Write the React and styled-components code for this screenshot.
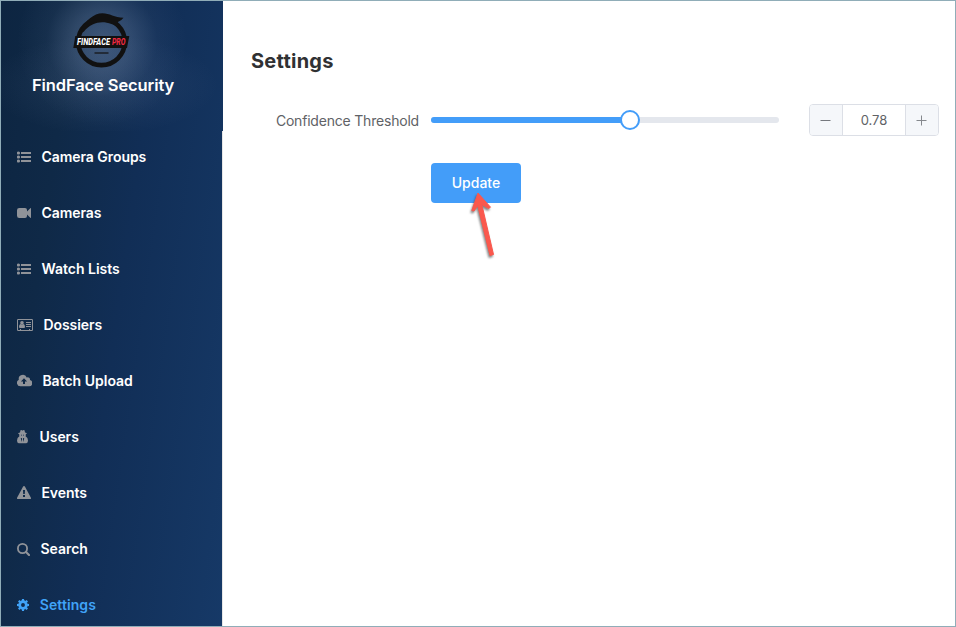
import React from "react";
import styled, { createGlobalStyle } from "styled-components";

const Global = createGlobalStyle`
  *, *::before, *::after { box-sizing: border-box; }
  body { margin: 0; background: #fff; font-family: Inter, "Liberation Sans", sans-serif; }
`;

const Frame = styled.div`
  display: flex;
  width: 956px;
  height: 627px;
  overflow: hidden;
  border: 1px solid #90adb8;
  background: #fff;
`;

const Sidebar = styled.aside`
  flex: 0 0 222px;
  display: flex;
  flex-direction: column;
  background: linear-gradient(98deg, #0d2541 0%, #0f2947 24%, #112e56 52%, #163967 100%);
`;

const Brand = styled.header`
  flex: 0 0 130px;
  display: flex;
  flex-direction: column;
  align-items: center;
  padding: 11px 18px 0 0;
  background:
    radial-gradient(circle 85px at 101px 40px, rgba(150, 170, 205, 0.34), rgba(150, 170, 205, 0.23) 35%, rgba(150, 170, 205, 0.06) 65%, transparent),
    radial-gradient(ellipse 115px 50px at 102px 84px, rgba(150, 170, 205, 0.12), transparent);
`;

const Logo = styled.svg`
  display: block;
  width: 60px;
  height: 56px;
  margin-right: 3px;
`;

const BrandName = styled.div`
  margin-top: 6px;
  color: #fff;
  font-size: 16.5px;
  font-weight: 600;
  line-height: 22px;
  letter-spacing: -0.1px;
  white-space: nowrap;
`;

const Menu = styled.nav`
  flex: 1;
  display: flex;
  flex-direction: column;
  border-right: 1px solid #e6e6e6;
`;

const MenuItem = styled.a`
  flex: 0 0 56px;
  display: flex;
  align-items: center;
  gap: ${(p) => p.$gap || 10.4}px;
  padding-left: 16px;
  color: ${(p) => (p.$active ? "#40a3f8" : "#fff")};
  font-size: 14px;
  font-weight: 600;
  letter-spacing: ${(p) => p.$spacing || 0}px;
  white-space: nowrap;

  &:first-child {
    margin-top: -3px;
  }

  svg {
    flex: none;
    margin-top: 2px;
    color: ${(p) => (p.$active ? "#40a3f8" : "#909399")};
  }
`;

const Main = styled.main`
  flex: 1;
  padding: 45px 16px 0 28px;
`;

const Title = styled.h1`
  margin: 0;
  color: #303133;
  font-size: 20px;
  font-weight: 700;
  line-height: 30px;
  letter-spacing: 0.25px;
`;

const Row = styled.div`
  display: flex;
  align-items: center;
  height: 40px;
  margin-top: 24px;
`;

const Label = styled.label`
  flex: 0 0 180px;
  padding: 1px 12px 0 0;
  color: #606266;
  font-size: 14px;
  letter-spacing: -0.2px;
  text-align: right;
  white-space: nowrap;
`;

const Track = styled.div`
  flex: 0 0 348px;
  display: flex;
  align-items: center;
  height: 6px;
  border-radius: 3px;
  background: #e4e7ed;
`;

const Fill = styled.div`
  width: 199px;
  height: 6px;
  border-radius: 3px 0 0 3px;
  background: #439df9;
`;

const Thumb = styled.div`
  flex: none;
  width: 20px;
  height: 20px;
  margin-left: -10px;
  border: 2px solid #439df9;
  border-radius: 50%;
  background: #fff;
`;

const Stepper = styled.div`
  display: grid;
  grid-template-columns: 32px 1fr 32px;
  width: 130px;
  height: 32px;
  margin-left: 30px;
  overflow: hidden;
  border: 1px solid #dcdfe6;
  border-radius: 4px;
`;

const StepButton = styled.button`
  display: grid;
  place-items: center;
  padding: 0 1px 0 0;
  border: 0;
  background: #f5f7fa;
  color: #606266;
`;

const StepValue = styled.div`
  border: solid #dcdfe6;
  border-width: 0 1px;
  color: #606266;
  font-size: 13px;
  line-height: 31px;
  text-align: center;
`;

const Actions = styled.div`
  position: relative;
  width: 90px;
  margin: 23px 0 0 180px;
`;

const Update = styled.button`
  display: block;
  width: 90px;
  height: 40px;
  padding: 0 0 1px;
  border: 0;
  border-radius: 4px;
  background: #439df9;
  color: #fff;
  font: 500 14px Inter, sans-serif;
`;

const Pointer = styled.svg`
  position: absolute;
  left: 35px;
  top: 26px;
  width: 40px;
  height: 74px;
  filter: drop-shadow(-1px 2px 1px rgba(50, 50, 50, 0.6));
`;

const ListIcon = () => (
  <svg width="14" height="14" viewBox="0 0 14 14" fill="currentColor">
    <circle cx="1.5" cy="3" r="1.6" /><circle cx="1.5" cy="7" r="1.6" /><circle cx="1.5" cy="11" r="1.6" />
    <path d="M4 2h10v2H4zM4 6h10v2H4zM4 10h10v2H4z" />
  </svg>
);

const CameraIcon = () => (
  <svg width="14" height="14" viewBox="0 0 14 14" fill="currentColor">
    <path d="M2.3 2H8a2 2 0 0 1 2 2v1.5L13.3 2.2q.7-.4.7.4v8.8q0 .8-.7.4L10 8.5V10a2 2 0 0 1-2 2H2.3A2.3 2.3 0 0 1 0 9.7V4.3A2.3 2.3 0 0 1 2.3 2z" />
  </svg>
);

const CardIcon = () => (
  <svg width="16" height="14" viewBox="0 0 16 14" fill="currentColor">
    <path fillRule="evenodd" d="M1.2 1h13.6Q16 1 16 2.2v9.6q0 1.2-1.2 1.2H1.2Q0 13 0 11.8V2.2Q0 1 1.2 1zM1 2v9.7q0 .3.3.3H3v-1h1v1h8v-1h1v1h1.7q.3 0 .3-.3V2z" />
    <circle cx="5" cy="4.8" r="1.8" />
    <path d="M3.4 6.1Q2 6.7 2 9q0 1 1 1h4q1 0 1-1 0-2.3-1.4-2.9Q5 7 3.4 6.1zM9 4h5v1H9zM9 6h5v1H9zM9 8h5v1H9z" />
  </svg>
);

const CloudIcon = () => (
  <svg width="15" height="14" viewBox="0 0 15 14" fill="currentColor">
    <path fillRule="evenodd" d="M3.5 12.3A3.5 3.5 0 0 1 1.8 5.7 4.1 4.1 0 0 1 9.7 3.6 2.1 2.1 0 0 1 12.9 6 3.2 3.2 0 0 1 12 12.3zM7 4.2 3.9 7.4h2.1V10h2V7.4h2.1z" />
  </svg>
);

const SpyIcon = () => (
  <svg width="11" height="14" viewBox="0 0 11 14" fill="currentColor">
    <path fillRule="evenodd" d="M3.5.3q.7-.4 1.4 0 .6.4 1.2 0 .7-.4 1.4 0L8 2.4q2 .3 2 .9T8.8 4v1.2L8.6 6.2Q11 7.4 11 10.6q0 2.6-1.7 2.6H1.7Q0 13.2 0 10.6 0 7.4 2.4 6.2L2.2 5.2V4Q1 3.9 1 3.3T3 2.4zM4 4.8v.7h1v-.7zm2 0v.7h1v-.7zM3.8 8l.6 4.1.7-3L4.7 8zm2.5 0-.4 1.1.7 3L7.2 8z" />
  </svg>
);

const WarningIcon = () => (
  <svg width="14" height="14" viewBox="0 0 14 14" fill="currentColor">
    <path fillRule="evenodd" d="M7 0q.6 0 .9.6l5.9 10.9q.7 1.5-.8 1.5H1q-1.5 0-.8-1.5L6.1.6Q6.4 0 7 0zM6 4 6.2 8h1.6L8 4zM6 9v2h2V9z" />
  </svg>
);

const SearchIcon = () => (
  <svg width="13" height="14" viewBox="0 0 13 14" fill="none" stroke="currentColor">
    <circle cx="5.5" cy="6.5" r="4.6" strokeWidth="1.8" />
    <path d="m9 10 3 3" strokeWidth="2.1" strokeLinecap="round" />
  </svg>
);

const TEETH = [0, 45, 90, 135, 180, 225, 270, 315];

const GearIcon = () => (
  <svg width="12" height="14" viewBox="0 0 12 14">
    <circle cx="6" cy="7" r="3.3" fill="none" stroke="currentColor" strokeWidth="2.7" />
    {TEETH.map((a) => (
      <path key={a} d="M4.7 2.9 5 1h2l.3 1.9z" fill="currentColor" transform={`rotate(${a} 6 7)`} />
    ))}
  </svg>
);

const ITEMS = [
  { label: "Camera Groups", icon: ListIcon, spacing: -0.05 },
  { label: "Cameras", icon: CameraIcon, spacing: -0.05 },
  { label: "Watch Lists", icon: ListIcon },
  { label: "Dossiers", icon: CardIcon, spacing: -0.05 },
  { label: "Batch Upload", icon: CloudIcon },
  { label: "Users", icon: SpyIcon, gap: 11.5, spacing: -0.05 },
  { label: "Events", icon: WarningIcon, spacing: -0.05 },
  { label: "Search", icon: SearchIcon },
  { label: "Settings", icon: GearIcon, active: true, gap: 10.7, spacing: 0.1 },
];

function BrandLogo() {
  return (
    <Logo viewBox="0 0 60 56">
      <circle cx="29.5" cy="29.8" r="23.3" fill="none" stroke="#111" strokeWidth="4.6" />
      <path d="M8.5 18C13.5 9 21.5 1.2 30.5 1.2c7 0 12 4.3 21 4.5q-2 3-6 4.5l2 6C37.5 9.5 23 6 11.5 20z" fill="#111" />
      <path d="M3.3 24h54L55 36H1.3z" fill="#111" />
      <path d="M22.5 41h14" stroke="#222b38" strokeWidth="2" />
      <text x="5" y="32.8" fill="#fff" fontFamily="Roboto" fontSize="8.2" fontWeight="800" fontStyle="italic" textLength="33" lengthAdjust="spacingAndGlyphs">FINDFACE</text>
      <text x="40" y="32.8" fill="#f02a42" fontFamily="Roboto" fontSize="8.2" fontWeight="800" fontStyle="italic" textLength="13.4" lengthAdjust="spacingAndGlyphs">PRO</text>
    </Logo>
  );
}

export default function App() {
  return (
    <>
      <Global />
      <Frame>
        <Sidebar>
          <Brand>
            <BrandLogo />
            <BrandName>FindFace Security</BrandName>
          </Brand>
          <Menu>
            {ITEMS.map(({ label, icon: Icon, active, gap, spacing }) => (
              <MenuItem key={label} $active={active} $gap={gap} $spacing={spacing}>
                <Icon />
                {label}
              </MenuItem>
            ))}
          </Menu>
        </Sidebar>
        <Main>
          <Title>Settings</Title>
          <Row>
            <Label>Confidence Threshold</Label>
            <Track>
              <Fill />
              <Thumb />
            </Track>
            <Stepper>
              <StepButton aria-label="Decrease">
                <svg width="11" height="11" viewBox="0 0 11 11"><path d="M.5 5.5h10" stroke="#76797e" /></svg>
              </StepButton>
              <StepValue>0.78</StepValue>
              <StepButton aria-label="Increase">
                <svg width="11" height="11" viewBox="0 0 11 11"><path d="M.5 5.5h10M5.5.5v10" stroke="#85888d" /></svg>
              </StepButton>
            </Stepper>
          </Row>
          <Actions>
            <Update>Update</Update>
            <Pointer viewBox="0 0 40 74">
              <path d="M12 4 24.5 18.2 22.5 19.5 15.8 15.5 27.5 65.5 24 66.5 11.7 16.5 8 22 5.8 21.5z" fill="#fa584d" stroke="#fa584d" strokeLinejoin="round" />
            </Pointer>
          </Actions>
        </Main>
      </Frame>
    </>
  );
}
